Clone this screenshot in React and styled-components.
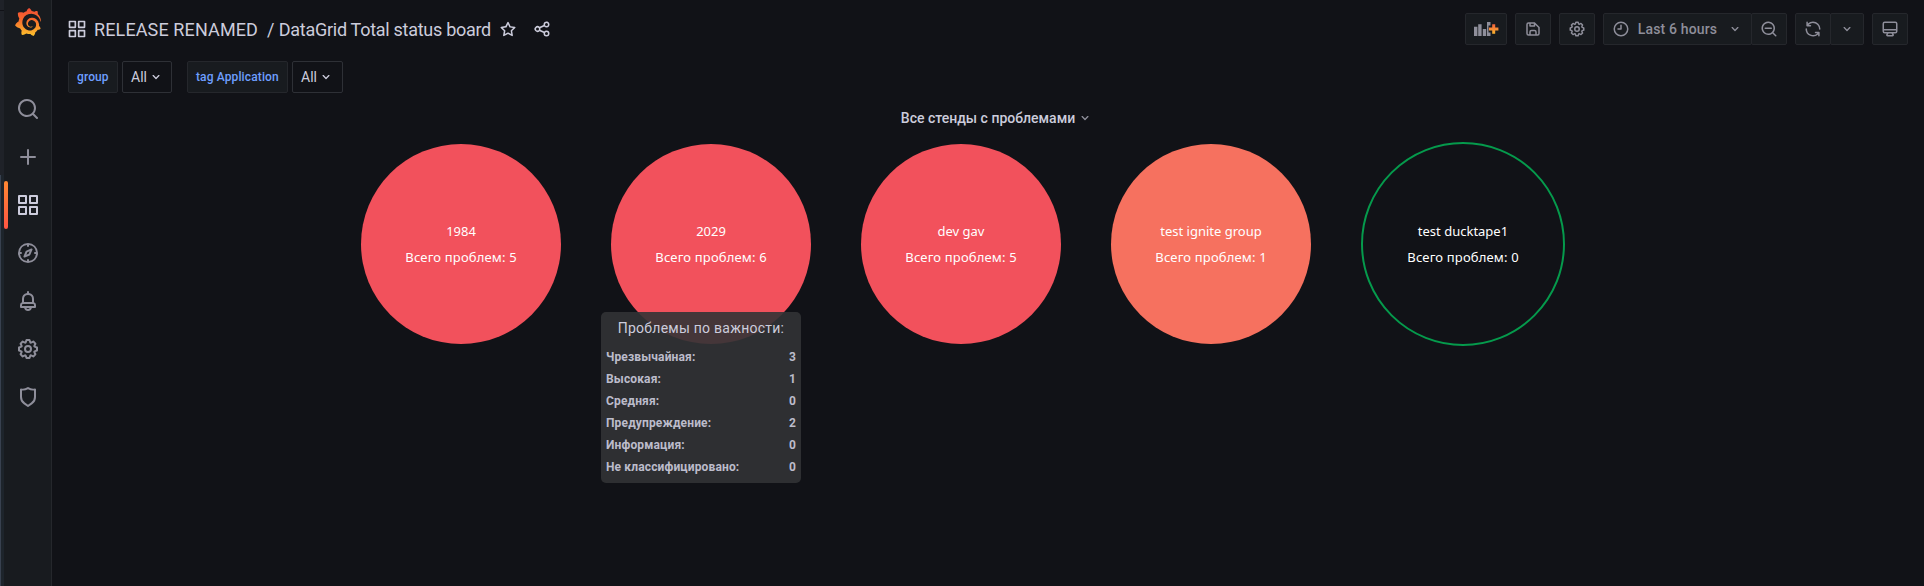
import React from "react";
import styled, { createGlobalStyle, css } from "styled-components";
import { SiGrafana } from "react-icons/si";

const c = {
  canvas: "#111217",
  panel: "#181b1f",
  line: "#25272c",
  text: "#ccccdc",
  muted: "#8e8e9a",
  link: "#6e9fff",
};

const GlobalStyle = createGlobalStyle`
  *, *::before, *::after { box-sizing: border-box; }
  body {
    margin: 0;
    background: ${c.canvas};
    color: ${c.text};
    font-family: Roboto, "Liberation Sans", sans-serif;
    font-size: 14px;
    line-height: 22px;
    overflow: hidden;
  }
`;

const paths = {
  search:
    "M21.71,20.29,18,16.61A9,9,0,1,0,16.61,18l3.68,3.68a1,1,0,0,0,1.42,0A1,1,0,0,0,21.71,20.29ZM11,18a7,7,0,1,1,7-7A7,7,0,0,1,11,18Z",
  plus: "M19,11H13V5a1,1,0,0,0-2,0v6H5a1,1,0,0,0,0,2h6v6a1,1,0,0,0,2,0V13h6a1,1,0,0,0,0-2Z",
  apps: "M10,13H3a1,1,0,0,0-1,1v7a1,1,0,0,0,1,1h7a1,1,0,0,0,1-1V14A1,1,0,0,0,10,13ZM9,20H4V15H9ZM21,2H14a1,1,0,0,0-1,1v7a1,1,0,0,0,1,1h7a1,1,0,0,0,1-1V3A1,1,0,0,0,21,2ZM20,9H15V4h5Zm1,4H14a1,1,0,0,0-1,1v7a1,1,0,0,0,1,1h7a1,1,0,0,0,1-1V14A1,1,0,0,0,21,13Zm-1,7H15V15h5ZM10,2H3A1,1,0,0,0,2,3v7a1,1,0,0,0,1,1h7a1,1,0,0,0,1-1V3A1,1,0,0,0,10,2ZM9,9H4V4H9Z",
  compass:
    "M12,2A10,10,0,1,0,22,12,10,10,0,0,0,12,2Zm1,17.93V19a1,1,0,0,0-2,0v.93A8,8,0,0,1,4.07,13H5a1,1,0,0,0,0-2H4.07A8,8,0,0,1,11,4.07V5a1,1,0,0,0,2,0V4.07A8,8,0,0,1,19.93,11H19a1,1,0,0,0,0,2h.93A8,8,0,0,1,13,19.93ZM15.14,7.55l-5,2.12a1,1,0,0,0-.52.52l-2.12,5a1,1,0,0,0,.21,1.1,1,1,0,0,0,.7.3.93.93,0,0,0,.4-.09l5-2.12a1,1,0,0,0,.52-.52l2.12-5a1,1,0,0,0-1.31-1.31Zm-2.49,5.1-2.28,1,1-2.28,2.28-1Z",
  bell: "M18,13.18V10a6,6,0,0,0-5-5.91V3a1,1,0,0,0-2,0V4.09A6,6,0,0,0,6,10v3.18A3,3,0,0,0,4,16v2a1,1,0,0,0,1,1H8.14a4,4,0,0,0,7.72,0H19a1,1,0,0,0,1-1V16A3,3,0,0,0,18,13.18ZM8,10a4,4,0,0,1,8,0v3H8Zm4,10a2,2,0,0,1-1.72-1h3.44A2,2,0,0,1,12,20Zm6-3H6V16a1,1,0,0,1,1-1H17a1,1,0,0,1,1,1Z",
  cog: "M21.32,9.55l-1.89-.63.89-1.78A1,1,0,0,0,20.13,6L18,3.87a1,1,0,0,0-1.15-.19l-1.78.89-.63-1.89A1,1,0,0,0,13.5,2h-3a1,1,0,0,0-.95.68L8.92,4.57,7.14,3.68A1,1,0,0,0,6,3.87L3.87,6a1,1,0,0,0-.19,1.15l.89,1.78-1.89.63A1,1,0,0,0,2,10.5v3a1,1,0,0,0,.68.95l1.89.63-.89,1.78A1,1,0,0,0,3.87,18L6,20.13a1,1,0,0,0,1.15.19l1.78-.89.63,1.89a1,1,0,0,0,.95.68h3a1,1,0,0,0,.95-.68l.63-1.89,1.78.89A1,1,0,0,0,18,20.13L20.13,18a1,1,0,0,0,.19-1.15l-.89-1.78,1.89-.63A1,1,0,0,0,22,13.5v-3A1,1,0,0,0,21.32,9.55ZM20,12.78l-1.2.4A2,2,0,0,0,17.64,16l.57,1.14-1.1,1.1L16,17.64a2,2,0,0,0-2.79,1.16l-.4,1.2H11.22l-.4-1.2A2,2,0,0,0,8,17.64l-1.14.57-1.1-1.1L6.36,16A2,2,0,0,0,5.2,13.18L4,12.78V11.22l1.2-.4A2,2,0,0,0,6.36,8L5.79,6.89l1.1-1.1L8,6.36A2,2,0,0,0,10.82,5.2l.4-1.2h1.56l.4,1.2A2,2,0,0,0,16,6.36l1.14-.57,1.1,1.1L17.64,8a2,2,0,0,0,1.16,2.79l1.2.4ZM12,8a4,4,0,1,0,4,4A4,4,0,0,0,12,8Zm0,6a2,2,0,1,1,2-2A2,2,0,0,1,12,14Z",
  shield:
    "M19.63,3.65a1,1,0,0,0-.84-.2,8,8,0,0,1-6.22-1.27,1,1,0,0,0-1.14,0A8,8,0,0,1,5.21,3.45a1,1,0,0,0-.84.2A1,1,0,0,0,4,4.43v7.45a9,9,0,0,0,3.77,7.33l3.65,2.6a1,1,0,0,0,1.16,0l3.65-2.6A9,9,0,0,0,20,11.88V4.43A1,1,0,0,0,19.63,3.65ZM18,11.88a7,7,0,0,1-2.93,5.7L12,19.77,8.93,17.58A7,7,0,0,1,6,11.88V5.58a10,10,0,0,0,6-1.39,10,10,0,0,0,6,1.39Z",
  star: "M22,9.67A1,1,0,0,0,21.14,9l-5.69-.83L12.9,3a1,1,0,0,0-1.8,0L8.55,8.16,2.86,9a1,1,0,0,0-.81.68,1,1,0,0,0,.25,1l4.13,4-1,5.68A1,1,0,0,0,6.9,21.44L12,18.77l5.1,2.67a.93.93,0,0,0,.46.12,1,1,0,0,0,.59-.19,1,1,0,0,0,.4-1l-1-5.68,4.13-4A1,1,0,0,0,22,9.67Zm-6.15,4a1,1,0,0,0-.29.88l.72,4.2-3.76-2a1.06,1.06,0,0,0-.94,0l-3.76,2,.72-4.2a1,1,0,0,0-.29-.88l-3-3,4.21-.61a1,1,0,0,0,.76-.55L12,5.7l1.88,3.82a1,1,0,0,0,.76.55l4.21.61Z",
  share:
    "M18,14a4,4,0,0,0-3.08,1.48l-5.1-2.35a3.64,3.64,0,0,0,0-2.26l5.1-2.35A4,4,0,1,0,14,6a4.17,4.17,0,0,0,.07.71L8.79,9.14a4,4,0,1,0,0,5.72l5.28,2.43A4.17,4.17,0,0,0,14,18a4,4,0,1,0,4-4ZM18,4a2,2,0,1,1-2,2A2,2,0,0,1,18,4ZM6,14a2,2,0,1,1,2-2A2,2,0,0,1,6,14Zm12,6a2,2,0,1,1,2-2A2,2,0,0,1,18,20Z",
  save: "M20.71,9.29l-6-6a1,1,0,0,0-.32-.21A1.09,1.09,0,0,0,14,3H6A3,3,0,0,0,3,6V18a3,3,0,0,0,3,3H18a3,3,0,0,0,3-3V10A1,1,0,0,0,20.71,9.29ZM9,5h4V7H9Zm6,14H9V16a1,1,0,0,1,1-1h4a1,1,0,0,1,1,1Zm4-1a1,1,0,0,1-1,1H17V16a3,3,0,0,0-3-3H10a3,3,0,0,0-3,3v3H6a1,1,0,0,1-1-1V6A1,1,0,0,1,6,5H7V8A1,1,0,0,0,8,9h6a1,1,0,0,0,1-1V6.41l4,4Z",
  clock:
    "M12,6a1,1,0,0,0-1,1v4H8a1,1,0,0,0,0,2h4a1,1,0,0,0,1-1V7A1,1,0,0,0,12,6Zm0-4A10,10,0,1,0,22,12,10,10,0,0,0,12,2Zm0,18a8,8,0,1,1,8-8A8,8,0,0,1,12,20Z",
  angle:
    "M17,9.17a1,1,0,0,0-1.41,0L12,12.71,8.46,9.17a1,1,0,0,0-1.41,0,1,1,0,0,0,0,1.42l4.24,4.24a1,1,0,0,0,1.42,0L17,10.59A1,1,0,0,0,17,9.17Z",
  zoomOut:
    "M21.71,20.29,18,16.61A9,9,0,1,0,16.61,18l3.68,3.68a1,1,0,0,0,1.42,0A1,1,0,0,0,21.71,20.29ZM11,18a7,7,0,1,1,7-7A7,7,0,0,1,11,18Zm4-8H7a1,1,0,0,0,0,2h8a1,1,0,0,0,0-2Z",
  sync: "M19.91,15.51H15.38a1,1,0,0,0,0,2h2.4A8,8,0,0,1,4,12a1,1,0,1,0-2,0,10,10,0,0,0,16.88,7.23V21a1,1,0,0,0,2,0V16.5A1,1,0,0,0,19.91,15.51ZM12,2A10,10,0,0,0,5.12,4.77V3a1,1,0,0,0-2,0V7.5a1,1,0,0,0,1,1h4.5a1,1,0,0,0,0-2H6.22A8,8,0,0,1,20,12a1,1,0,0,0,2,0A10,10,0,0,0,12,2Z",
  monitor:
    "M19,2H5A3,3,0,0,0,2,5V15a3,3,0,0,0,3,3H7.64l-.58,1a2,2,0,0,0,0,2,2,2,0,0,0,1.75,1h6.46A2,2,0,0,0,17,21a2,2,0,0,0,0-2l-.59-1H19a3,3,0,0,0,3-3V5A3,3,0,0,0,19,2ZM8.77,20,10,18H14l1.2,2ZM20,15a1,1,0,0,1-1,1H5a1,1,0,0,1-1-1V14H20Zm0-3H4V5A1,1,0,0,1,5,4H19a1,1,0,0,1,1,1Z",
};

const Glyph = styled.svg`
  display: block;
  flex: none;
  fill: currentColor;
`;

const Icon = ({ name, size = 16 }) => (
  <Glyph width={size} height={size} viewBox="0 0 24 24" aria-hidden="true">
    <path d={paths[name]} />
  </Glyph>
);

const AddPanelIcon = () => (
  <Glyph width="25" height="16" viewBox="0 0 25 16" aria-hidden="true">
    <path d="M0 5.700h3.400V15H0zM4.200 3.300h3.400V15H4.200zM8.800 8h3.400v7H8.800zM13 1h3.500v3.500h-2v7h2V15H13z" />
    <path
      d="M18.200 3.200h3v3.300h3.200v3h-3.200v3.300h-3V9.500H15v-3h3.200z"
      fill="url(#warm-plus)"
    />
    <defs>
      <linearGradient id="warm-plus" x1="0" y1="0" x2="0" y2="1">
        <stop offset="0" stopColor="#f2603c" />
        <stop offset="1" stopColor="#fbb62f" />
      </linearGradient>
    </defs>
  </Glyph>
);

const Page = styled.div`
  display: flex;
  width: 100%;
  height: 586px;
`;

const EdgeStrip = styled.div`
  flex: none;
  display: flex;
  flex-direction: column;
  width: 4px;
  background: #1f2228;
`;

const EdgeCap = styled.div`
  height: 11px;
  border-bottom: 1px solid #111217;
`;

const EdgeGlow = styled.div`
  flex: 1;
  margin-top: 164px;
  border-left: 1px solid #38414f;
  background: #1d242b;
`;

const SideMenu = styled.nav`
  flex: none;
  display: flex;
  flex-direction: column;
  width: 48px;
  background: ${c.panel};
  border-right: 1px solid ${c.line};
`;

const Logo = styled.div`
  display: flex;
  justify-content: center;
  height: 85px;
  padding: 8px 0 0 1px;

  path {
    fill: url(#logo-fire);
  }
`;

const HiddenDefs = styled.svg`
  display: block;
  width: 0;
  height: 0;
`;

const MenuItem = styled.a`
  display: flex;
  align-items: center;
  height: 48px;
  padding-left: 12px;
  color: ${c.muted};

  ${(p) =>
    p.$active &&
    css`
      gap: 8px;
      padding-left: 0;
      color: ${c.text};

      &::before {
        content: "";
        width: 4px;
        height: 48px;
        border-radius: 2px;
        background: linear-gradient(#ff8833, #ff5543);
      }
    `}
`;

const Main = styled.main`
  flex: 1;
  min-width: 0;
  display: flex;
  flex-direction: column;
  padding: 13px 16px 0;
`;

const Toolbar = styled.header`
  display: flex;
  align-items: center;
  height: 32px;
`;

const Crumbs = styled.div`
  display: flex;
  align-items: center;
  flex: 1;
  margin-left: -1px;
`;

const Title = styled.h1`
  width: 397px;
  margin: 0 8px 0 7px;
  padding-top: 1px;
  font-size: 18px;
  font-weight: 400;
  line-height: 32px;
  white-space: pre;
`;

const Folder = styled.span`
  letter-spacing: 0.12px;
`;

const DashboardName = styled.span`
  letter-spacing: -0.28px;
`;

const TitleActions = styled.div`
  display: flex;
  gap: 16px;
`;

const Actions = styled.div`
  display: flex;
  gap: 8px;
`;

const ToolButton = styled.button`
  display: flex;
  align-items: center;
  justify-content: center;
  width: ${(p) => p.$width || 36}px;
  height: 32px;
  padding: 0;
  border: 1px solid ${c.line};
  border-radius: 2px;
  background: ${c.panel};
  color: ${c.muted};
  font: 500 14px/30px Roboto, "Liberation Sans", sans-serif;
`;

const ButtonGroup = styled.div`
  display: flex;

  ${ToolButton} + ${ToolButton} {
    margin-left: -1px;
  }
`;

const RangeLabel = styled.span`
  margin: 0 10px 0 8px;
  letter-spacing: 0.15px;
`;

const Filters = styled.div`
  display: flex;
  gap: 15px;
  margin-top: 16px;
`;

const Filter = styled.div`
  display: flex;
  gap: 4px;
`;

const FilterLabel = styled.label`
  width: ${(p) => p.$width}px;
  height: 32px;
  padding-left: 8px;
  border: 1px solid ${c.line};
  border-radius: 2px;
  background: ${c.panel};
  color: ${c.link};
  font-size: 12px;
  font-weight: 500;
  line-height: 30px;
  letter-spacing: 0.12px;
`;

const FilterValue = styled.div`
  display: flex;
  align-items: center;
  gap: 1px;
  width: ${(p) => p.$width}px;
  height: 32px;
  padding-left: 8px;
  border: 1px solid #2e3036;
  border-radius: 2px;
`;

const PanelTitle = styled.h2`
  display: flex;
  align-items: center;
  justify-content: center;
  gap: 2px;
  height: 32px;
  margin: 9px 0 0 18px;
  font-size: 14px;
  font-weight: 500;
  line-height: 22px;

  svg {
    color: ${c.muted};
  }
`;

const Board = styled.section`
  display: flex;
  align-items: center;
  justify-content: center;
  gap: 50px;
  height: 204px;
  margin-right: 50px;
  margin-top: 8px;
`;

const fills = { high: "#f2515c", average: "#f6715f" };

const Bubble = styled.article`
  position: relative;
  flex: none;
  display: flex;
  flex-direction: column;
  align-items: center;
  justify-content: center;
  gap: 4px;
  width: ${(p) => (p.$level === "ok" ? 204 : 200)}px;
  height: ${(p) => (p.$level === "ok" ? 204 : 200)}px;
  border: ${(p) => (p.$level === "ok" ? "2px solid #059a4c" : "0")};
  border-radius: 50%;
  background: ${(p) => fills[p.$level] || "transparent"};
  color: #fff;
  font: 13px/22px "Noto Sans", "Open Sans", sans-serif;
`;

const Total = styled.span`
  letter-spacing: 0.16px;
`;

const Tooltip = styled.aside`
  position: absolute;
  top: 168px;
  left: -10px;
  width: 200px;
  height: 171px;
  padding: 5px;
  border-radius: 5px;
  background: rgba(50, 51, 53, 0.9);
  color: ${c.text};
  font-family: Roboto, "Liberation Sans", sans-serif;
`;

const TooltipTitle = styled.div`
  margin-bottom: 7px;
  font-size: 14px;
  line-height: 22px;
  text-align: center;
  letter-spacing: 0.25px;
`;

const TooltipRow = styled.div`
  display: flex;
  justify-content: space-between;
  font-size: 12px;
  font-weight: 700;
  line-height: 22px;
  letter-spacing: 0.14px;
  color: #bcbccb;
`;

const menu = ["search", "plus", "apps", "compass", "bell", "cog", "shield"];

const stands = [
  { name: "1984", total: 5, level: "high" },
  {
    name: "2029",
    total: 6,
    level: "high",
    severities: [
      ["Чрезвычайная:", 3],
      ["Высокая:", 1],
      ["Средняя:", 0],
      ["Предупреждение:", 2],
      ["Информация:", 0],
      ["Не классифицировано:", 0],
    ],
  },
  { name: "dev gav", total: 5, level: "high" },
  { name: "test ignite group", total: 1, level: "average" },
  { name: "test ducktape1", total: 0, level: "ok" },
];

export default function App() {
  return (
    <Page>
      <GlobalStyle />
      <EdgeStrip>
        <EdgeCap />
        <EdgeGlow />
      </EdgeStrip>
      <SideMenu>
        <Logo>
          <SiGrafana size={28} />
          <HiddenDefs>
            <linearGradient id="logo-fire" x1="0" y1="0" x2="0" y2="1">
              <stop offset="0" stopColor="#f04e35" />
              <stop offset="0.4" stopColor="#f7682c" />
              <stop offset="1" stopColor="#fcc32c" />
            </linearGradient>
          </HiddenDefs>
        </Logo>
        {menu.map((name) => (
          <MenuItem key={name} $active={name === "apps"}>
            <Icon name={name} size={24} />
          </MenuItem>
        ))}
      </SideMenu>
      <Main>
        <Toolbar>
          <Crumbs>
            <Icon name="apps" size={20} />
            <Title>
              <Folder>RELEASE RENAMED</Folder>
              {"  / "}
              <DashboardName>DataGrid Total status board</DashboardName>
            </Title>
            <TitleActions>
              <Icon name="star" size={18} />
              <Icon name="share" size={18} />
            </TitleActions>
          </Crumbs>
          <Actions>
            <ToolButton $width={42}>
              <AddPanelIcon />
            </ToolButton>
            <ToolButton>
              <Icon name="save" size={18} />
            </ToolButton>
            <ToolButton>
              <Icon name="cog" size={18} />
            </ToolButton>
            <ButtonGroup>
              <ToolButton $width={149}>
                <Icon name="clock" size={18} />
                <RangeLabel>Last 6 hours</RangeLabel>
                <Icon name="angle" />
              </ToolButton>
              <ToolButton>
                <Icon name="zoomOut" size={18} />
              </ToolButton>
            </ButtonGroup>
            <ButtonGroup>
              <ToolButton>
                <Icon name="sync" size={18} />
              </ToolButton>
              <ToolButton $width={34}>
                <Icon name="angle" />
              </ToolButton>
            </ButtonGroup>
            <ToolButton>
              <Icon name="monitor" size={18} />
            </ToolButton>
          </Actions>
        </Toolbar>
        <Filters>
          <Filter>
            <FilterLabel $width={50}>group</FilterLabel>
            <FilterValue $width={50}>
              All
              <Icon name="angle" />
            </FilterValue>
          </Filter>
          <Filter>
            <FilterLabel $width={101}>tag Application</FilterLabel>
            <FilterValue $width={51}>
              All
              <Icon name="angle" />
            </FilterValue>
          </Filter>
        </Filters>
        <PanelTitle>
          Все стенды с проблемами
          <Icon name="angle" />
        </PanelTitle>
        <Board>
          {stands.map((s) => (
            <Bubble key={s.name} $level={s.level}>
              <span>{s.name}</span>
              <Total>{`Всего проблем: ${s.total}`}</Total>
              {s.severities && (
                <Tooltip>
                  <TooltipTitle>Проблемы по важности:</TooltipTitle>
                  {s.severities.map(([label, count]) => (
                    <TooltipRow key={label}>
                      <span>{label}</span>
                      <span>{count}</span>
                    </TooltipRow>
                  ))}
                </Tooltip>
              )}
            </Bubble>
          ))}
        </Board>
      </Main>
    </Page>
  );
}
